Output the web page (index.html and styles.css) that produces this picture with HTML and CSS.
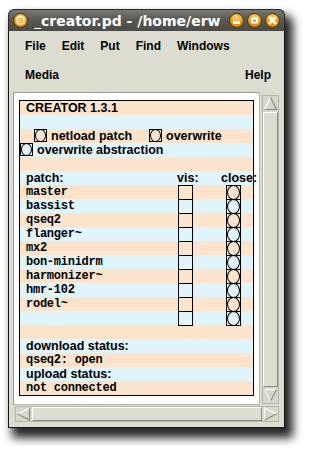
FILE: index.html
```html
<!DOCTYPE html>
<html>
<head>
<meta charset="utf-8">
<link rel="stylesheet" href="styles.css">
</head>
<body>
<div class="win">
  <div class="titlebar">
    <svg class="ticon" viewBox="0 0 15 15">
      <defs><radialGradient id="g0" cx="50%" cy="30%" r="65%"><stop offset="0" stop-color="#ffd878"/><stop offset="1" stop-color="#d98200"/></radialGradient></defs>
      <circle cx="7.5" cy="7.5" r="7" fill="url(#g0)" stroke="#4a3000" stroke-width="1"/>
      <rect x="3.5" y="3.5" width="8" height="8" rx="2" fill="#fff"/>
      <rect x="4.5" y="5.2" width="6" height="1" fill="#e09020"/>
      <rect x="4.5" y="7.2" width="6" height="1" fill="#e09020"/>
      <rect x="4.5" y="9.2" width="6" height="1" fill="#e09020"/>
    </svg>
    <span class="title">_creator.pd - /home/erw</span>
    <div class="tbtns">
      <svg viewBox="0 0 15 15">
        <defs><radialGradient id="g1" cx="50%" cy="30%" r="65%"><stop offset="0" stop-color="#ffd878"/><stop offset="1" stop-color="#d98200"/></radialGradient></defs>
        <circle cx="7.5" cy="7.5" r="7" fill="url(#g1)" stroke="#4a3000" stroke-width="1"/>
        <rect x="4" y="8.5" width="7" height="2.5" rx="0.8" fill="#fff"/>
      </svg>
      <svg viewBox="0 0 15 15">
        <defs><radialGradient id="g2" cx="50%" cy="30%" r="65%"><stop offset="0" stop-color="#ffd878"/><stop offset="1" stop-color="#d98200"/></radialGradient></defs>
        <circle cx="7.5" cy="7.5" r="7" fill="url(#g2)" stroke="#4a3000" stroke-width="1"/>
        <rect x="4" y="4.5" width="7" height="6" rx="1.2" fill="#fff"/>
        <rect x="5.8" y="6.5" width="3.4" height="2.2" fill="#e89a30"/>
      </svg>
      <svg viewBox="0 0 15 15">
        <defs><radialGradient id="g3" cx="50%" cy="30%" r="65%"><stop offset="0" stop-color="#ffd878"/><stop offset="1" stop-color="#d98200"/></radialGradient></defs>
        <circle cx="7.5" cy="7.5" r="7" fill="url(#g3)" stroke="#4a3000" stroke-width="1"/>
        <path d="M4.6 4.6 L10.4 10.4 M10.4 4.6 L4.6 10.4" stroke="#fff" stroke-width="2.3" stroke-linecap="round"/>
      </svg>
    </div>
  </div>
  <div class="body">
    <div class="menu">
      <div class="mrow"><span>File</span><span>Edit</span><span>Put</span><span>Find</span><span>Windows</span></div>
      <div class="mrow split"><span>Media</span><span>Help</span></div>
    </div>
    <div class="work">
      <div class="canvas">
        <div class="frame">
          <div class="row p txt">CREATOR 1.3.1</div>
          <div class="row b"></div>
          <div class="row p opts1"><span class="bng"></span><span class="lbl w98">netload patch</span><span class="bng"></span><span class="lbl">overwrite</span></div>
          <div class="row b opts2"><span class="bng"></span><span class="lbl">overwrite abstraction</span></div>
          <div class="row p"></div>
          <div class="row b hdr"><span>patch:</span><span>vis:</span><span>close:</span></div>
          <div class="row p prow"><span class="nm">master</span><span class="vis"></span><span></span><span class="cls"></span></div>
          <div class="row b prow"><span class="nm">bassist</span><span class="vis"></span><span></span><span class="cls"></span></div>
          <div class="row p prow"><span class="nm">qseq2</span><span class="vis"></span><span></span><span class="cls"></span></div>
          <div class="row b prow"><span class="nm">flanger~</span><span class="vis"></span><span></span><span class="cls"></span></div>
          <div class="row p prow"><span class="nm">mx2</span><span class="vis"></span><span></span><span class="cls"></span></div>
          <div class="row b prow"><span class="nm">bon-minidrm</span><span class="vis"></span><span></span><span class="cls"></span></div>
          <div class="row p prow"><span class="nm">harmonizer~</span><span class="vis"></span><span></span><span class="cls"></span></div>
          <div class="row b prow"><span class="nm">hmr-102</span><span class="vis"></span><span></span><span class="cls"></span></div>
          <div class="row p prow"><span class="nm">rodel~</span><span class="vis"></span><span></span><span class="cls"></span></div>
          <div class="row b prow"><span class="nm"></span><span class="vis"></span><span></span><span class="cls"></span></div>
          <div class="row p"></div>
          <div class="row b txt">download status:</div>
          <div class="row p mono">qseq2: open</div>
          <div class="row b txt">upload status:</div>
          <div class="row p mono">not connected</div>
        </div>
      </div>
      <div class="vscroll">
        <svg class="arr" viewBox="0 0 15 15"><polyline points="1.5,13.5 7.5,1.5" class="hl"/><polyline points="7.5,1.5 13.5,13.5 1.5,13.5" class="sh"/></svg>
        <div class="thumb"></div>
        <svg class="arr" viewBox="0 0 15 15"><polyline points="1.5,1.5 13.5,1.5" class="hl"/><polyline points="1.5,1.5 7.5,13.5 13.5,1.5" class="sh"/><polyline points="1.5,1.5 7.5,13.5" class="hl"/></svg>
      </div>
    </div>
    <div class="hscroll">
      <svg class="arr" viewBox="0 0 15 14"><polyline points="13.5,1 1.5,7 " class="hl"/><polyline points="1.5,7 13.5,13 13.5,1" class="sh"/></svg>
      <div class="thumb"></div>
      <svg class="arr" viewBox="0 0 15 14"><polyline points="1.5,13 1.5,1 13.5,7" class="hl"/><polyline points="13.5,7 1.5,13" class="sh"/></svg>
    </div>
  </div>
</div>
</body>
</html>
```
FILE: styles.css
```css
* { box-sizing: border-box; margin: 0; padding: 0; }
html, body { background: #fff; }
body { width: 310px; height: 453px; overflow: hidden; padding: 9px 0 0 8px; }

.win {
  width: 277px; height: 419px;
  display: flex; flex-direction: column;
  border-radius: 6px 6px 0 0;
  background: #dcdcd0;
  box-shadow: 6px 8px 10px 2px rgba(0,0,0,.85);
}

.titlebar {
  height: 22px; flex: none;
  display: flex; align-items: center;
  padding: 0 4px 0 4px;
  background: linear-gradient(#7a7a74, #5a5a55 45%, #4a4a46);
  border: 1px solid #2a2a27; border-bottom: none;
  border-radius: 6px 6px 0 0;
}
.ticon { width: 15px; height: 15px; flex: none; }
.title {
  margin-left: 6px; flex: 1;
  color: #fff; font: bold 14px "DejaVu Sans", sans-serif;
  white-space: nowrap; overflow: hidden;
}
.tbtns { display: flex; gap: 3px; flex: none; }
.tbtns svg { width: 15px; height: 15px; }

.body {
  flex: 1; display: flex; flex-direction: column;
  border: 1px solid #151515; border-top: none;
  padding: 0 5px 5px 4px;
}

.menu { height: 58px; flex: none; font: bold 12px "Liberation Sans", Arial, sans-serif; color: #000; }
.mrow { height: 29px; display: flex; align-items: center; gap: 16px; padding: 0 8px 0 12px; }
.mrow.split { justify-content: space-between; }

.work { display: flex; gap: 2px; margin-top: 3px; flex: none; }
.canvas {
  width: 247px; height: 313px;
  background: #fff;
  border: 1px solid; border-color: #9a9a90 #b4b4aa #b4b4aa #9a9a90;
  padding: 7px 0 0 5px;
}
.frame { width: 235px; height: 296px; border: 1px solid #000; }

.row { height: 14px; line-height: 14px; white-space: nowrap; color: #000; }
.row.p { background: #fce4cc; }
.row.b { background: #e0f4fc; }
.txt, .hdr, .opts1, .opts2 { font: bold 12.5px/14px "Liberation Sans", Arial, sans-serif; }
.txt { padding-left: 6px; }
.mono, .nm { font: bold 12px/14px "Liberation Mono", "Courier New", monospace; letter-spacing: -0.25px; }
.mono { padding-left: 6px; }

.opts1 { display: flex; align-items: flex-start; padding-left: 14px; }
.opts2 { display: flex; align-items: flex-start; padding-left: 0; }
.lbl { margin-left: 4px; }
.w98 { width: 98px; flex: none; margin-left: 4px; }

.bng {
  width: 13px; height: 13px; flex: none;
  border: 1px solid #000;
  display: flex; align-items: center; justify-content: center;
}
.bng::after { content: ""; width: 11px; height: 11px; border: 1px solid #000; border-radius: 50%; }

.hdr { display: grid; grid-template-columns: 151px 44px auto; padding-left: 6px; }
.prow { display: grid; grid-template-columns: 152px 15px 33px 15px; padding-left: 6px; align-items: start; }
.vis { width: 15px; height: 15px; border: 1px solid #000; }
.cls {
  width: 15px; height: 15px; border: 1px solid #000;
  display: flex; align-items: center; justify-content: center;
}
.cls::after { content: ""; width: 13px; height: 13px; border: 1px solid #000; border-radius: 50%; }

.vscroll {
  width: 17px; height: 309px; margin-top: 3px;
  display: flex; flex-direction: column;
  border: 1px solid #b4b4a8;
  background: #d6d6ca;
}
.vscroll .arr { width: 15px; height: 15px; flex: none; }
.vscroll .thumb { flex: 1; margin: 1px 0; border: 1px solid; border-color: #fff #8c8c84 #8c8c84 #fff; background: #dcdcd0; }

.hscroll {
  height: 16px; margin: 1px 0 0 2px; flex: none;
  display: flex;
  border: 1px solid #b4b4a8;
  background: #d6d6ca;
}
.hscroll .arr { width: 15px; height: 14px; flex: none; }
.hscroll .thumb { flex: 1; margin: 0 1px; border: 1px solid; border-color: #fff #8c8c84 #8c8c84 #fff; background: #dcdcd0; }

.hl { fill: none; stroke: #fff; stroke-width: 1.2; }
.sh { fill: none; stroke: #8c8c84; stroke-width: 1.2; }
```
